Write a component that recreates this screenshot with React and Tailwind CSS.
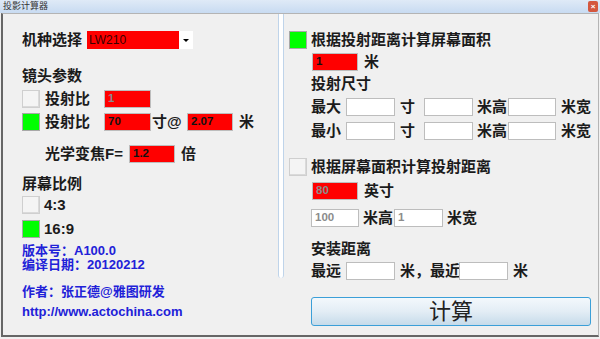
const cjk = "font-['Liberation_Sans','Noto_Sans_CJK_SC',sans-serif]";

function Box({ on }) {
  return (
    <div
      className={
        on
          ? "w-[18px] h-[18px] shrink-0 bg-[#00ff00] border border-[#a8a8a8]"
          : "w-[18px] h-[18px] shrink-0 bg-[#f4f4f4] border border-[#cfcfcf] shadow-[inset_-1px_-1px_0_#dadada]"
      }
    />
  );
}

function Field({ w, red, value, dim }) {
  return (
    <div
      className={`${w} h-[18px] shrink-0 border border-[#bdbdbd] ${
        red ? "bg-[#ff0000]" : "bg-white"
      } pl-[3px] flex items-center text-[11.5px] font-bold font-['Liberation_Sans',sans-serif] ${
        dim ? "text-[#8c8c8c]" : "text-[#111]"
      }`}
    >
      {value}
    </div>
  );
}

function Label({ children, className = "" }) {
  return (
    <span className={`text-[15px] leading-[18px] font-bold text-[#1b1b1b] whitespace-nowrap ${className}`}>
      {children}
    </span>
  );
}

export default function App() {
  return (
    <div className={`w-[600px] h-[339px] bg-[#f0f0f0] overflow-hidden ${cjk}`}>
      {/* title bar */}
      <div className="h-[13px] bg-gradient-to-b from-[#dfeaf7] to-[#c8dbf1] flex items-center justify-between pl-[3px] pr-[2px]">
        <span className="text-[9px] leading-none text-[#333]">投影计算器</span>
        <div className="w-[10px] h-[11px] bg-[#d4583f] rounded-[2px] flex items-center justify-center text-white text-[8px] leading-none font-bold">
          ×
        </div>
      </div>

      {/* window body */}
      <div className="ml-[1px] w-[598px] h-[324px] border-l-2 border-b-2 border-[#666] border-t border-t-[#b4b4b4] border-r border-r-[#b4b4b4] flex">
        {/* left */}
        <div className="w-[275px] pl-[19px] flex flex-col">
          <div className="mt-[17px] h-[18px] flex items-center">
            <Label className="w-[65px]">机种选择</Label>
            <div className="w-[106px] h-[18px] bg-white flex items-center">
              <div className="w-[92px] h-[18px] bg-[#ff0000] pl-[2px] flex items-center text-[12px] text-[#3a0000] font-['Liberation_Sans',sans-serif]">
                LW210
              </div>
              <div className="flex-1 flex justify-center">
                <div className="w-0 h-0 border-l-[3px] border-r-[3px] border-t-[3px] border-l-transparent border-r-transparent border-t-black" />
              </div>
            </div>
          </div>

          <div className="mt-[18px] h-[18px] flex items-center">
            <Label>镜头参数</Label>
          </div>

          <div className="mt-[5px] h-[18px] flex items-center">
            <Box />
            <Label className="ml-[5px] w-[59px]">投射比</Label>
            <Field w="w-[47px]" red value="1" dim />
          </div>

          <div className="mt-[5px] h-[18px] flex items-center">
            <Box on />
            <Label className="ml-[5px] w-[59px]">投射比</Label>
            <Field w="w-[47px]" red value="70" />
            <Label className="ml-[1px] w-[35px]">寸@</Label>
            <Field w="w-[46px]" red value="2.07" />
            <Label className="ml-[6px]">米</Label>
          </div>

          <div className="mt-[14px] h-[18px] flex items-center">
            <Label className="ml-[23px] w-[84px]">光学变焦F=</Label>
            <Field w="w-[46px]" red value="1.2" />
            <Label className="ml-[6px]">倍</Label>
          </div>

          <div className="mt-[12px] h-[18px] flex items-center">
            <Label>屏幕比例</Label>
          </div>

          <div className="mt-[3px] h-[18px] flex items-center">
            <Box />
            <Label className="ml-[4px]">4:3</Label>
          </div>

          <div className="mt-[6px] h-[18px] flex items-center">
            <Box on />
            <Label className="ml-[4px]">16:9</Label>
          </div>

          <div className="mt-[6px] text-[13px] leading-[14px] font-bold text-[#2121d8]">
            <div>版本号：A100.0</div>
            <div>编译日期：20120212</div>
          </div>

          <div className="mt-[13px] text-[13px] leading-[14px] font-bold text-[#2121d8]">
            作者：张正德@雅图研发
          </div>
          <div className="mt-[6px] text-[13px] leading-[14px] font-bold text-[#2121d8]">
            http://www.actochina.com
          </div>
        </div>

        {/* divider */}
        <div className="w-[6px] h-[264px] bg-white border-x border-[#bfd4ea] rounded-b-[3px]" />

        {/* right */}
        <div className="flex-1 pl-[5px] flex flex-col">
          <div className="mt-[17px] h-[18px] flex items-center">
            <Box on />
            <Label className="ml-[4px]">根据投射距离计算屏幕面积</Label>
          </div>

          <div className="mt-[4px] ml-[23px] h-[18px] flex items-center">
            <Field w="w-[46px]" red value="1" />
            <Label className="ml-[6px]">米</Label>
          </div>

          <div className="mt-[4px] ml-[22px] h-[18px] flex items-center">
            <Label>投射尺寸</Label>
          </div>

          {["最大", "最小"].map((t, i) => (
            <div key={t} className={`${i === 0 ? "mt-[5px]" : "mt-[6px]"} ml-[22px] h-[18px] flex items-center`}>
              <Label className="w-[35px]">{t}</Label>
              <Field w="w-[49px]" />
              <Label className="ml-[5px] w-[24px]">寸</Label>
              <Field w="w-[49px]" />
              <Label className="ml-[4px] w-[31px]">米高</Label>
              <Field w="w-[48px]" />
              <Label className="ml-[5px]">米宽</Label>
            </div>
          ))}

          <div className="mt-[18px] h-[18px] flex items-center">
            <Box />
            <Label className="ml-[4px]">根据屏幕面积计算投射距离</Label>
          </div>

          <div className="mt-[6px] ml-[23px] h-[18px] flex items-center">
            <Field w="w-[46px]" red value="80" dim />
            <Label className="ml-[6px]">英寸</Label>
          </div>

          <div className="mt-[9px] ml-[22px] h-[18px] flex items-center">
            <Field w="w-[48px]" value="100" dim />
            <Label className="ml-[4px] w-[31px]">米高</Label>
            <Field w="w-[49px]" value="1" dim />
            <Label className="ml-[4px]">米宽</Label>
          </div>

          <div className="mt-[13px] ml-[22px] h-[18px] flex items-center">
            <Label>安装距离</Label>
          </div>

          <div className="mt-[4px] ml-[22px] h-[18px] flex items-center">
            <Label className="w-[35px]">最远</Label>
            <Field w="w-[49px]" />
            <Label className="ml-[5px] w-[59px]">米，最近</Label>
            <Field w="w-[49px]" />
            <Label className="ml-[5px]">米</Label>
          </div>

          <button className="mt-[17px] ml-[22px] w-[280px] h-[29px] border border-[#3b9fd8] rounded-[3px] bg-gradient-to-b from-[#f3f8fc] via-[#e3edf5] to-[#c6dbea] flex items-center justify-center text-[22px] leading-none text-[#222]">
            计算
          </button>
        </div>
      </div>
    </div>
  );
}
